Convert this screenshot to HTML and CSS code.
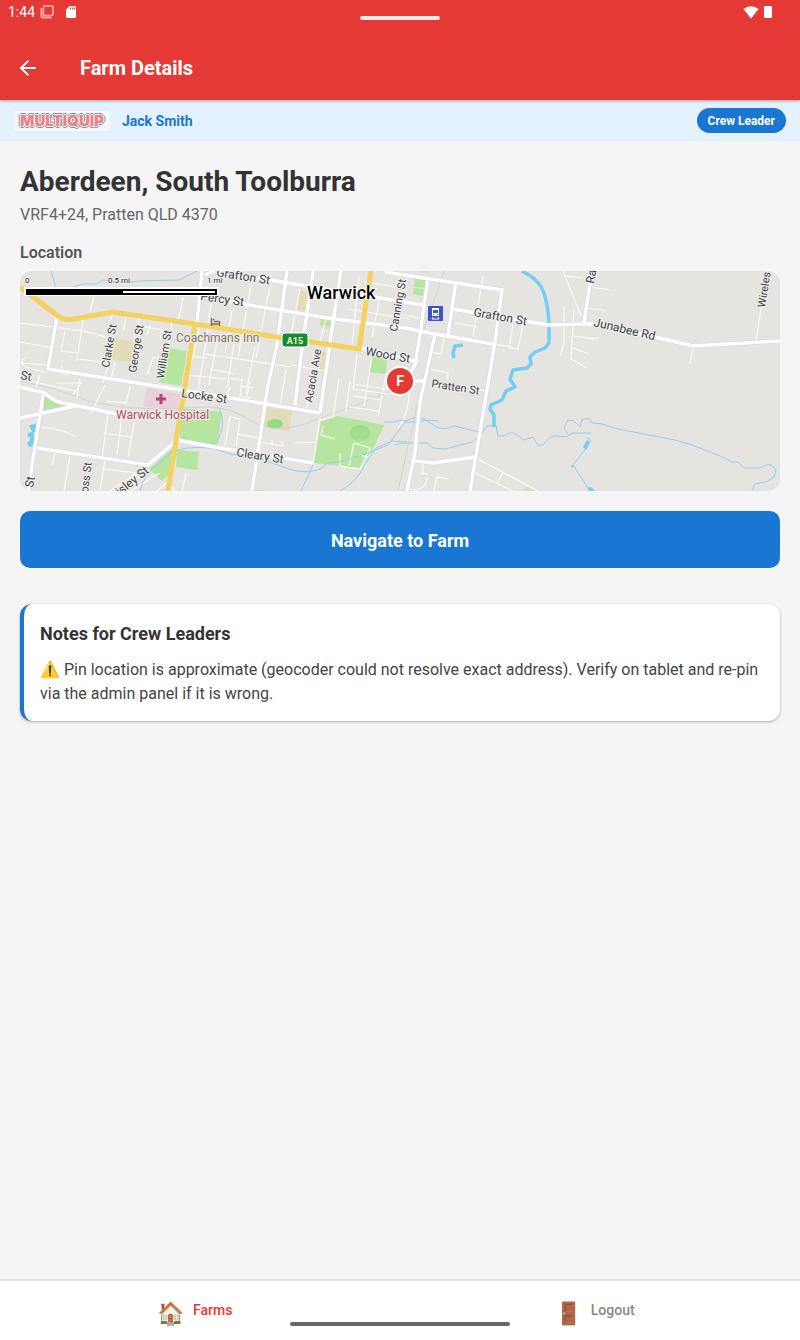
FILE: index.html
```html
<!DOCTYPE html>
<html lang="en">
<head>
  <meta charset="UTF-8">
  <meta name="viewport" content="width=device-width, initial-scale=1.0">
  <title>Farm Details</title>
  <link rel="stylesheet" href="styles.css">
</head>
<body>
  <header class="header">
    <div class="statusBar">
      <span class="clock">1:44</span>
      <svg class="statusIcon" width="14" height="14" viewBox="0 0 14 14" fill="none" stroke="#fff" stroke-width="1.6" opacity="0.6">
        <rect x="3.5" y="1" width="9.5" height="9.5" rx="1"/>
        <path d="M1.500 3v8.500q0 1 1 1h9" stroke-width="2"/>
      </svg>
      <svg class="statusIcon sdCard" width="10" height="12" viewBox="0 0 10 12">
        <path d="M3.5 0H9q1 0 1 1v10q0 1-1 1H1q-1 0-1-1V3.5z" fill="#fff"/>
        <path d="M4.5 1.5v2M6.5 1.5v2M8.5 1.5v2" stroke="#e53935"/>
      </svg>
      <span class="notch"></span>
      <svg class="statusIcon wifi" width="16" height="13" viewBox="0 0 16 13">
        <path d="M.4 3Q8-2.600 15.600 3L8 12.600z" fill="#fff"/>
      </svg>
      <svg class="statusIcon" width="8" height="12" viewBox="0 0 8 12">
        <rect width="8" height="12" rx="1" fill="#fff"/>
      </svg>
    </div>
    <div class="titleBar">
      <button class="backButton" type="button" aria-label="Back">
        <svg width="24" height="24" viewBox="0 0 24 24" fill="none" stroke="#fff" stroke-width="2">
          <path d="M20 12H5.500M12.500 4.600L5 12l7.500 7.400"/>
        </svg>
      </button>
      <h1 class="pageTitle">Farm Details</h1>
    </div>
  </header>

  <div class="userBar">
    <span class="logo">MULTIQUIP</span>
    <span class="userName">Jack Smith</span>
    <span class="roleBadge">Crew Leader</span>
  </div>

  <main class="content">
    <h2 class="farmName">Aberdeen, South Toolburra</h2>
    <p class="farmAddress">VRF4+24, Pratten QLD 4370</p>

    <h3 class="sectionLabel">Location</h3>
    <div class="map">
      <svg class="mapCanvas" viewBox="0 0 760 220" preserveAspectRatio="xMidYMid slice" role="img" aria-label="Map of Warwick">
        <!-- parks -->
        <g class="park">
          <path d="M149 77l18 3-6 35-22-4z"/>
          <path d="M24 126l29 9-29 6z"/>
          <path d="M161 137l41 4-5 34-37-6z"/>
          <path d="M157 179l22 2-2 18-21-3z"/>
          <path d="M152 178l-23 20 13 12 9-9z"/>
          <path d="M301 151l16-6 47 9-10 22-14 21-46-5z"/>
          <path d="M301 47l11 1-1 8-11-2zM300 82l5-1-1 13-7-1zM352 85l15 1-1 17-16-2z"/>
          <path d="M395 6l11 1-1 10-11-1zM394 17l10 1-1 7-10-2z"/>
        </g>
        <g class="sand">
          <path d="M95 67l20 4-2 21-23-4z"/>
          <path d="M279 19l9 3-1 18-10-2zM302 54l9 1v4l-10-2zM301 83l6 1-2 17-8-1z"/>
          <path d="M246 136l26 4-3 21-26-6zM233 218l14 2h-14zM505 215l11 5h-13zM397 0h12v3z"/>
        </g>
        <path class="hospital" d="M127 117l33 6-3 18-34-6z"/>
        <ellipse cx="255" cy="153" rx="8" ry="5" fill="#94dc84"/>
        <ellipse cx="340" cy="162" rx="10" ry="8" fill="#a2dc8d"/>

        <!-- railway -->
        <path class="rail" d="M0 110q20 4 40 10t28 10q40 10 92 7l30-1q22 1 40 13 20 14 52 5l52-19 51-21L424 0M410 77L378 220"/>

        <!-- minor streets -->
        <g class="minor">
          <path d="M0 52l64 8 22 6M74 25l-4 16M63 48l-6 42M45 60l-4 20 16 2M0 71l34 6M0 92l28 2M28 98l20 6M6 86q-8 4 0 10l20 6"/>
          <path d="M93 42l-3 8M106 46l-3 14M119 47l-5 20M59 88l30 4-6 20M95 92l-4 16M130 54l-3 10M120 55l22 4-2 10M133 86l-6 18M152 52l-8 46M163 26l-4 22M132 87h10M118 50v8M42 95v8"/>
          <path d="M195 10l-7 42M212 39l-7 43M231 14l-13 72M250 15l-14 72M197 70l-8 44M214 73l-7 44M235 76l-9 46M185 83l86 13M272 94l32 6M190 98l24 5M280 18l-10 50M306 48l-6 22M339 5l-7 70M385 8l-3 20M360 26l-8 40M328 38l62 10M344 11l38 6"/>
          <path d="M180 54l-14 60M188 58l-10 62M167 85l20 2M167 104l40 4M352 85l-8 50M337 84l-4 34 36 5M330 110l-4 30M333 113l40 6M333 125l28 4M329 136l30 4M366 102l-8 44M319 108l-6 38-13 3"/>
          <path d="M0 108l55 12M20 104l-4 12M36 112h25l-8 12M60 107l-3 20M85 114l-14 28M110 116l-4 16-20-2M88 143l-6 44M102 145l-5 38M116 142l-8 44M83 162l28 4M22 156q20 2 33 9M35 182l-3 12M50 184l-6 36M85 188l-5 32M111 220l28-18M82 198l35 4-27 18M155 220l-8-8-10 8M166 202l-4 18"/>
          <path d="M210 116l-4 12M210 107l12 2-2 18M230 110l-3 15M266 99l-6 36M292 102l-5 35M221 115l12 2M219 125l12 2M205 175l5-29 10 2-4 28M217 163l22 4M240 171l22 4 1-5M252 168v6M275 172l20-1"/>
          <path d="M300 146l-7 46M303 155l-2 9 14 4M320 182v13l20 3 10-21-16-5-5 22M339 184l9 2M260 187l33 5"/>
          <path d="M463 5l-10 60M435 52l23 4M425 63l-4 20-10-2M493 53l-4 24 9 1 5-25M473 73l20 3M543 0l18 45M545 5l18 2M544 35v38l-4 12M554 38l-3 50 16 9M554 65l20 3M553 77l16 6M378 157q13-15 12-55M375 42l28 6"/>
          <path d="M458 188l60 32M453 201l40 19M483 201l-6 11M403 192v12M400 202l8 1M407 207q-2 14-17 11M414 220l3-14 12 2M411 98l17 4-1 7M467 120l-9-1"/>
          <path d="M570 16l20 3M568 37l18 3M565 67h14M741 37l-5 34M673 78l-3 15"/>
        </g>

        <!-- creeks -->
        <g class="creek">
          <path d="M31 0l5 17q6 4 12 1l14-5 14 0 7-4q20 4 36 1l40-1 20-10"/>
          <path d="M199 137q6 14 2 24l-4 11M120 220q4-16 15-24l18-16q30-8 52 1l8 3 9-2 50 17q15 4 28-1l8-6 12-1 28-9 20-8 17-23h15l4-2 15 1M293 194l-12 26M320 220q18-10 25-27l11-16 16-7 15 1"/>
          <path d="M364 151h10l8-2 4 1q10-6 18-2l14 9q8 2 16-2l21 5 7 2 5-7 9-1 2 11h6l8-4 5 3 7 5 9-3 5 9 6-2q6-9 12-8l10 1 7-4h18M548 163l-4-6 4-8 6 1 6 6 2-7 6-2 4 5 10 1 16 5 57 11 17 5 26 10 14 7 6 0 6 6h16l6-3q5-2 10 5l-2 7-8 5-11 2-3 7"/>
          <path d="M375 174l8-2h24l6 5 12 1 27-7 10-9M567 167q6 1 1 8l-15 19 15 23 5 3"/>
        </g>
        <path class="river" d="M502 0q18 9 22 22t5 30v20l-4 5-10 4-5 5 1 7-4 4-14 2-3 9 5 8-9 4-4 9-11 5-1 4 4 6v12" />
        <path class="river" d="M443 74l-8 1-2 7 1 5"/>
        <path class="pond" d="M9 154l7-1v7l-3 2 2 4v9l-6 1-2-5 3-1v-4h-2v-4l4-1zM567 169l3 2-4 8-3-3zM551 194l3 1-2 2zM567 217l4-1 4 4h-6z"/>

        <!-- main streets -->
        <g class="streetEdge">
          <path id="streets" d="M37 46l-9 52 134 21M162 119l138 23M0 116l25 6q6 6 14 9l58 12M0 147l55-12M23 124L8 220M17 177l111 17 29-25 38 7 98 16M182 0l-5 52M267 0l-10 74-9 40-16 106M293 0l-11 77-7 57M321 0l-8 51-13 91M185 4l10-4M199 0l51 9 153 25M177 24l45 9 86 14 77 10 30 6 58 10M342 77l56 14M365 1l117 18-7 52-25 149M408 7l-8 57-5 30-12 18M436 11l-8 53M415 63l-15 68-5 50-8 39M395 190l18 2 42-6M433 38l72 12 23 4 44-1 63 13 38 9 87-5M572 0l-8 52M395 110h9"/>
        </g>
        <use class="streetFill" href="#streets"/>
        <path class="highway" d="M0 16l38 29q6 5 16 3l39-7 75 11 95 15 76 11 12-78M175 53l-10 61-17 106"/>

        <!-- points of interest -->
        <rect x="262" y="62" width="26" height="14" rx="3" fill="#148c37" stroke="#fff"/>
        <text class="shield" x="275" y="73">A15</text>
        <path class="bed" d="M191.500 47v8M191 53h9M199.500 50v5M194 50.500h5M193 48.500h1.500"/>
        <path class="cross" d="M141 123v10M136 128h10"/>
        <rect x="408" y="35" width="15" height="15" rx="1" fill="#3f51cf"/>
        <path d="M412 37h7v8h-7z" fill="#fff"/>
        <path d="M413 39h5v3h-5zM413 43h1v1h-1zM417 43h1v1h-1z" fill="#3f51cf"/>
        <path d="M412 48h7M413 46l-1 2M418 46l1 2" stroke="#fff"/>

        <!-- labels -->
        <g class="streetName">
          <text transform="translate(196 5) rotate(9)">Grafton St</text>
          <text transform="translate(180 29) rotate(8)">Percy St</text>
          <text transform="translate(161 126) rotate(8)">Locke St</text>
          <text transform="translate(345 84) rotate(10)">Wood St</text>
          <text transform="translate(453 45) rotate(10)">Grafton St</text>
          <text transform="translate(573 55) rotate(13)">Junabee Rd</text>
          <text transform="translate(574 13) rotate(-80)">Ra</text>
          <text transform="translate(216 185) rotate(9)">Cleary St</text>
          <text transform="translate(0 108) rotate(10)">St</text>
          <text transform="translate(13 217) rotate(-80)">St</text>
          <text transform="translate(100 225) rotate(-39)">isley St</text>
        </g>
        <g class="streetName narrow">
          <text transform="translate(89 97) rotate(-80)">Clarke St</text>
          <text transform="translate(116 102) rotate(-81)">George St</text>
          <text transform="translate(144 108) rotate(-81)">William St</text>
          <text transform="translate(292 132) rotate(-80)">Acacia Ave</text>
          <text transform="translate(377 61) rotate(-80)">Canning St</text>
          <text transform="translate(411 116) rotate(9)">Pratten St</text>
          <text transform="translate(745 37) rotate(-81)">Wireles</text>
          <text transform="translate(68 222) rotate(-83)">oss St</text>
        </g>
        <text class="placeName" x="156" y="71">Coachmans Inn</text>
        <text class="placeName hospitalName" x="96" y="148">Warwick Hospital</text>
        <text class="townName" x="287" y="28">Warwick</text>

        <!-- scale bar -->
        <rect x="4" y="16" width="195" height="9" fill="#fff"/>
        <rect x="6" y="18" width="191" height="6" fill="#000"/>
        <rect x="103" y="20" width="92" height="2" fill="#fff"/>
        <g class="scaleText">
          <text x="5" y="12">0</text>
          <text x="88" y="12">0.5 mi</text>
          <text x="187" y="12">1 mi</text>
        </g>
      </svg>
      <span class="farmPin">F</span>
    </div>

    <button class="navigateButton" type="button">Navigate to Farm</button>

    <section class="notes">
      <h3 class="notesTitle">Notes for Crew Leaders</h3>
      <p class="notesText">⚠️ Pin location is approximate (geocoder could not resolve exact address). Verify on tablet and re-pin via the admin panel if it is wrong.</p>
    </section>
  </main>

  <nav class="tabBar">
    <a class="tab active" href="#farms"><span class="tabIcon">🏠</span><span class="tabLabel">Farms</span></a>
    <a class="tab" href="#logout"><span class="tabIcon">🚪</span><span class="tabLabel">Logout</span></a>
    <span class="homeIndicator"></span>
  </nav>
</body>
</html>
```
FILE: styles.css
```css
* {
  box-sizing: border-box;
  margin: 0;
  padding: 0;
}
body {
  background-color: #f5f5f5;
  color: #333;
  font-family: Roboto, "Noto Color Emoji", sans-serif;
  display: flex;
  flex-direction: column;
  min-height: 100vh;
}

/* Header */
.header {
  background-color: #e53935;
  color: #fff;
  position: relative;
  box-shadow: 0 1px 3px rgba(0, 0, 0, 0.3);
}
.statusBar {
  display: flex;
  align-items: center;
  height: 24px;
  padding: 0 28px 0 8px;
}
.clock {
  font-size: 14px;
  margin-right: 5px;
}
.sdCard {
  margin-left: 12px;
}
.wifi {
  margin-left: auto;
  margin-right: 5px;
}
.notch {
  position: absolute;
  top: 16px;
  left: 50%;
  width: 80px;
  height: 4px;
  margin-left: -40px;
  border-radius: 2px;
  background: #fbe9e8;
}
.titleBar {
  display: flex;
  align-items: center;
  gap: 40px;
  height: 76px;
  padding: 12px 16px 0;
}
.backButton {
  width: 24px;
  height: 24px;
  background: none;
  border: none;
  cursor: pointer;
}
.backButton svg {
  display: block;
}
.pageTitle {
  font-size: 20px;
  font-weight: 700;
}

/* Logged in user */
.userBar {
  display: flex;
  align-items: center;
  gap: 12px;
  height: 41px;
  padding: 0 14px;
  background-color: #e3f2fd;
}
.logo {
  width: 96px;
  height: 20px;
  line-height: 20px;
  text-align: center;
  background: #f2f8fd;
  color: #ee7f88;
  font-family: Inter, sans-serif;
  font-size: 15px;
  font-weight: 900;
  text-shadow: 1px 0 #fff, -1px 0 #fff, 0 1px #fff, 0 -1px #fff, 2px 0 #888, -2px 0 #888, 0 2px #888, 0 -2px #888, 1px 1px #888, -1px -1px #888, 1px -1px #888, -1px 1px #888;
}
.userName {
  color: #1976d2;
  font-size: 14px;
  font-weight: 700;
}
.roleBadge {
  margin-left: auto;
  padding: 1px 11px 0;
  line-height: 24px;
  border-radius: 13px;
  background-color: #1976d2;
  color: #fff;
  font-size: 12px;
  font-weight: 700;
}

/* Farm */
.content {
  flex: 1;
  padding: 21px 20px 20px;
}
.farmName {
  font-size: 28px;
  font-weight: 700;
  line-height: 40px;
}
.farmAddress {
  color: #666;
  font-size: 16px;
  line-height: 26px;
  margin-bottom: 14px;
}
.sectionLabel {
  color: #555;
  font-size: 16px;
  font-weight: 600;
  line-height: 22px;
  margin-bottom: 7px;
}
.map {
  position: relative;
  height: 220px;
  border-radius: 12px;
  overflow: hidden;
  background: #e5e4e0;
}
.mapCanvas {
  display: block;
  width: 100%;
  height: 100%;
}
.park { fill: #b5e59e; }
.sand { fill: #e4dcb8; }
.hospital { fill: #e8d1da; }
.pond { fill: #73cef2; }
.minor {
  fill: none;
  stroke: #fafaf8;
  stroke-width: 1.2;
}
.rail {
  fill: none;
  stroke: #d4d1c8;
}
.creek {
  fill: none;
  stroke: #96cdf0;
}
.river {
  fill: none;
  stroke: #73cef2;
  stroke-width: 3.5;
  stroke-linejoin: round;
}
.streetEdge {
  fill: none;
  stroke: #d9d8e3;
  stroke-width: 4.6;
}
.streetFill {
  fill: none;
  stroke: #fff;
  stroke-width: 3.4;
}
.highway {
  fill: none;
  stroke: #f3d261;
  stroke-width: 5;
}
.bed {
  fill: none;
  stroke: #8a6a58;
  stroke-width: 1.5;
}
.cross {
  stroke: #b8446d;
  stroke-width: 3;
}
.streetName {
  fill: #40404a;
  font-size: 12px;
  stroke: #f0f0ec;
  stroke-width: 2px;
  paint-order: stroke;
}
.narrow {
  font-size: 11px;
}
.placeName {
  fill: #86705f;
  font-size: 12px;
  stroke: #f0f0ec;
  stroke-width: 2px;
  paint-order: stroke;
}
.hospitalName {
  fill: #b04a6e;
}
.townName {
  fill: #000;
  font-size: 18px;
  font-weight: 500;
  stroke: #fff;
  stroke-width: 2px;
  paint-order: stroke;
}
.shield {
  fill: #f3f5c0;
  font-size: 9px;
  font-weight: 700;
  text-anchor: middle;
}
.scaleText {
  fill: #222;
  font-size: 8px;
  stroke: #fff;
  stroke-width: 1px;
  paint-order: stroke;
}
.farmPin {
  position: absolute;
  top: 50%;
  left: 50%;
  width: 30px;
  height: 30px;
  margin: -15px 0 0 -15px;
  border: 2px solid #fff;
  border-radius: 50%;
  background-color: #e53935;
  color: #fff;
  font-size: 14px;
  font-weight: 700;
  line-height: 26px;
  text-align: center;
}
.navigateButton {
  display: block;
  width: 100%;
  margin-top: 20px;
  padding: 17px 16px 15px;
  border: none;
  border-radius: 10px;
  background-color: #1976d2;
  color: #fff;
  font-family: inherit;
  font-size: 18px;
  font-weight: 700;
  line-height: 25px;
  cursor: pointer;
}
.notes {
  margin-top: 36px;
  padding: 16px 16px 15px;
  border-left: 4px solid #1976d2;
  border-radius: 12px;
  background-color: #fff;
  box-shadow: 0 1px 3px rgba(0, 0, 0, 0.3);
}
.notesTitle {
  font-size: 18px;
  font-weight: 700;
  line-height: 28px;
  margin-bottom: 10px;
}
.notesText {
  color: #444;
  font-size: 16px;
  line-height: 24px;
}

/* Bottom tabs */
.tabBar {
  position: relative;
  display: flex;
  height: 61px;
  padding-bottom: 1px;
  border-top: 2px solid #e4e4e4;
  background-color: #fff;
}
.tab {
  flex: 1;
  display: flex;
  align-items: center;
  justify-content: center;
  gap: 8px;
  padding-right: 10px;
  color: #888;
  font-size: 14px;
  font-weight: 500;
  text-decoration: none;
}
.tab.active {
  color: #e53935;
}
.tabIcon {
  font-size: 22px;
  padding-top: 7px;
}
.homeIndicator {
  position: absolute;
  bottom: 14px;
  left: 50%;
  width: 220px;
  height: 4px;
  margin-left: -110px;
  border-radius: 2px;
  background: #666;
}
```
